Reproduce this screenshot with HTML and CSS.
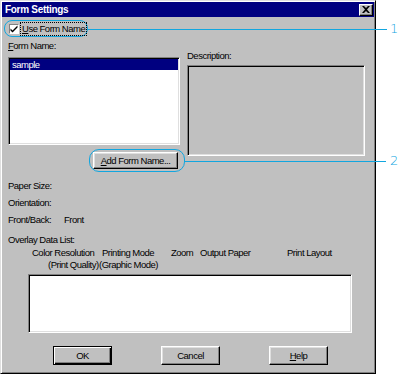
FILE: index.html
```html
<!DOCTYPE html>
<html lang="en">
<head>
    <meta charset="UTF-8">
    <meta name="viewport" content="width=device-width, initial-scale=1.0">
    <title>Form Settings</title>
    <link rel="stylesheet" href="styles.css">
</head>
<body>
    <div class="window">
        <div class="titlebar">
            <span class="title">Form Settings</span>
            <span class="close-btn">
                <svg width="8" height="7" viewBox="0 0 8 7"><path d="M0 0h2l2 2 2-2h2L5 3.5 8 7H6L4 5 2 7H0l3-3.5z" fill="#000"/></svg>
            </span>
        </div>
        <div class="content">
            <div class="callout callout-use">
                <span class="checkbox">
                    <svg width="8" height="8" viewBox="0 0 8 8"><path d="M0.5 3.5l2 2 5-5v2l-5 5-2-2z" fill="#000"/></svg>
                </span>
                <span class="focus-label"><u>U</u>se Form Name</span>
                <span class="callout-line"></span>
                <span class="callout-num">1</span>
            </div>

            <div class="form-row">
                <div class="form-col">
                    <div class="label"><u>F</u>orm Name:</div>
                    <div class="listbox">
                        <div class="list-item selected">sample</div>
                    </div>
                    <div class="add-row">
                        <div class="callout callout-add">
                            <button class="btn btn-add"><u>A</u>dd Form Name...</button>
                            <span class="callout-line"></span>
                            <span class="callout-num">2</span>
                        </div>
                    </div>
                </div>
                <div class="desc-col">
                    <div class="label">Description:</div>
                    <div class="desc-box"></div>
                </div>
            </div>

            <div class="info">
                <div class="info-row">Paper Size:</div>
                <div class="info-row">Orientation:</div>
                <div class="info-row"><span class="info-key">Front/Back:</span>Front</div>
            </div>

            <div class="overlay-label">Overlay Data List:</div>
            <div class="overlay-head head-top">
                <span>Color Resolution</span>
                <span>Printing Mode</span>
                <span>Zoom</span>
                <span>Output Paper</span>
                <span>Print Layout</span>
            </div>
            <div class="overlay-head head-bottom">
                <span>(Print Quality)</span>
                <span>(Graphic Mode)</span>
            </div>
            <div class="overlay-list"></div>

            <div class="buttons">
                <button class="btn btn-default">OK</button>
                <button class="btn">Cancel</button>
                <button class="btn"><u>H</u>elp</button>
            </div>
        </div>
    </div>
</body>
</html>
```

FILE: styles.css
```css
body {
    margin: 0;
    background-color: #fff;
    font-family: "Liberation Sans", Arial, sans-serif;
    font-size: 9.5px;
    letter-spacing: -0.5px;
    color: #000;
}
.window {
    box-sizing: border-box;
    width: 376px;
    height: 374px;
    padding: 1px;
    background-color: #c0c0c0;
    border: 1px solid;
    border-color: #dfdfdf #000 #000 #dfdfdf;
    box-shadow: inset 1px 1px #fff, inset -1px -1px #808080;
}
.titlebar {
    height: 15px;
    background-color: #000080;
    display: flex;
    align-items: center;
    justify-content: space-between;
    padding: 0 1px 0 3px;
}
.title {
    color: #fff;
    font-weight: bold;
    font-size: 10px;
    letter-spacing: -0.3px;
}
.close-btn {
    box-sizing: border-box;
    width: 14px;
    height: 12px;
    display: flex;
    align-items: center;
    justify-content: center;
    background-color: #c0c0c0;
    border: 1px solid;
    border-color: #fff #000 #000 #fff;
    box-shadow: inset -1px -1px #808080;
}
.callout {
    box-sizing: border-box;
    position: relative;
    border: 1px solid #12a6df;
    display: flex;
    align-items: center;
}
.callout-line {
    position: absolute;
    left: 100%;
    height: 1px;
    background-color: #12a6df;
}
.callout-num {
    position: absolute;
    color: #12a6df;
    font-family: "DejaVu Sans", sans-serif;
    font-weight: 200;
    font-size: 13px;
    line-height: 14px;
    letter-spacing: 0;
}
.callout-use {
    width: 84px;
    height: 17px;
    margin: 3px 0 0 2px;
    padding-left: 4px;
    border-radius: 8px;
}
.callout-use .callout-line {
    top: 8px;
    width: 300px;
}
.callout-use .callout-num {
    left: 385px;
    top: 1px;
}
.checkbox {
    box-sizing: border-box;
    width: 10px;
    height: 10px;
    background-color: #fff;
    border: 1px solid;
    border-color: #808080 #fff #fff #808080;
    display: flex;
    align-items: center;
    justify-content: center;
}
.focus-label {
    border: 1px dotted #000;
    padding: 0 1px;
    line-height: 12px;
    margin-left: 1px;
    white-space: nowrap;
}
.form-row {
    display: flex;
    margin: 3px 0 0 6px;
}
.form-col {
    width: 172px;
}
.label {
    line-height: 12px;
}
.listbox {
    box-sizing: border-box;
    height: 88px;
    margin-top: 5px;
    padding: 1px;
    background-color: #fff;
    border: 1px solid;
    border-color: #808080 #fff #fff #808080;
    box-shadow: inset 1px 1px #000, inset -1px -1px #dfdfdf;
}
.list-item {
    line-height: 11px;
    padding-left: 2px;
}
.list-item.selected {
    background-color: #000080;
    color: #fff;
}
.add-row {
    display: flex;
    justify-content: flex-end;
    margin: 4px -5px 0 0;
}
.callout-add {
    width: 96px;
    height: 23px;
    padding-left: 3px;
    border-radius: 10px;
}
.callout-add .callout-line {
    top: 11px;
    width: 202px;
}
.callout-add .callout-num {
    left: 300px;
    top: 4px;
}
.btn {
    box-sizing: border-box;
    padding: 0;
    font-family: inherit;
    font-size: 9.5px;
    letter-spacing: -0.5px;
    color: #000;
    background-color: #c0c0c0;
    border: 1px solid;
    border-color: #fff #000 #000 #fff;
    box-shadow: inset -1px -1px #808080, inset 1px 1px #dfdfdf;
}
.btn-add {
    width: 85px;
    height: 17px;
}
.desc-col {
    width: 178px;
    margin-left: 7px;
}
.desc-col .label {
    margin-top: 10px;
}
.desc-box {
    box-sizing: border-box;
    height: 91px;
    margin-top: 3px;
    border: 1px solid;
    border-color: #808080 #fff #fff #808080;
    box-shadow: inset 1px 1px #000, inset -1px -1px #dfdfdf;
}
.info {
    display: flex;
    flex-direction: column;
    gap: 5px;
    margin: 8px 0 0 6px;
}
.info-row {
    line-height: 12px;
}
.info-key {
    display: inline-block;
    width: 56px;
}
.overlay-label {
    line-height: 12px;
    margin: 8px 0 0 6px;
}
.overlay-head {
    display: grid;
    line-height: 12px;
    white-space: nowrap;
}
.head-top {
    margin-top: 1px;
    padding-left: 30px;
    grid-template-columns: 70px 69px 29px 87px auto;
}
.head-bottom {
    padding-left: 46px;
    grid-template-columns: 51px auto;
}
.overlay-list {
    box-sizing: border-box;
    width: 324px;
    height: 59px;
    margin: 3px 0 0 26px;
    background-color: #fff;
    border: 1px solid;
    border-color: #808080 #fff #fff #808080;
    box-shadow: inset 1px 1px #000, inset -1px -1px #dfdfdf;
}
.buttons {
    display: flex;
    gap: 49px;
    margin-top: 13px;
    padding-left: 51px;
}
.buttons .btn {
    width: 59px;
    height: 19px;
}
.btn-default {
    border-color: #000;
    box-shadow: inset 1px 1px #fff, inset -1px -1px #000, inset -2px -2px #808080;
}
```
